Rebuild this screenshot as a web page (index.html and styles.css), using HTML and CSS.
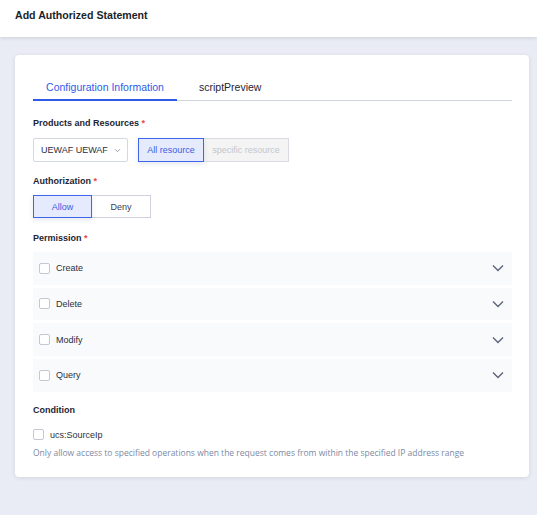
FILE: index.html
```html
<!DOCTYPE html>
<html>
<head>
<meta charset="utf-8">
<link rel="stylesheet" href="styles.css">
</head>
<body>
<header class="topbar"><h1 class="title">Add Authorized Statement</h1></header>
<main class="content">
  <section class="card">
    <nav class="tabs">
      <div class="tab active">Configuration Information</div>
      <div class="tab second">scriptPreview</div>
    </nav>

    <div class="label l-prod">Products and Resources <span class="req">*</span></div>
    <div class="row-controls">
      <div class="select">UEWAF UEWAF
        <svg class="sel-arrow" width="7" height="5" viewBox="0 0 7 5"><path d="M1 1.2l2.5 2.5 2.5-2.5" fill="none" stroke="#8a94a6" stroke-width="0.9"/></svg>
      </div>
      <div class="seg">
        <div class="seg-btn on">All resource</div>
        <div class="seg-btn disabled">specific resource</div>
      </div>
    </div>

    <div class="label l-auth">Authorization <span class="req">*</span></div>
    <div class="seg seg2">
      <div class="seg-btn on w59">Allow</div>
      <div class="seg-btn off w59">Deny</div>
    </div>

    <div class="label l-perm">Permission <span class="req">*</span></div>
    <div class="perms">
      <div class="perm"><span class="cb"></span><span class="perm-name">Create</span><svg class="chev" width="12" height="8" viewBox="0 0 12 8"><path d="M1 1.5l5 5 5-5" fill="none" stroke="#5b6478" stroke-width="1.4"/></svg></div>
      <div class="perm"><span class="cb"></span><span class="perm-name">Delete</span><svg class="chev" width="12" height="8" viewBox="0 0 12 8"><path d="M1 1.5l5 5 5-5" fill="none" stroke="#5b6478" stroke-width="1.4"/></svg></div>
      <div class="perm"><span class="cb"></span><span class="perm-name">Modify</span><svg class="chev" width="12" height="8" viewBox="0 0 12 8"><path d="M1 1.5l5 5 5-5" fill="none" stroke="#5b6478" stroke-width="1.4"/></svg></div>
      <div class="perm"><span class="cb"></span><span class="perm-name">Query</span><svg class="chev" width="12" height="8" viewBox="0 0 12 8"><path d="M1 1.5l5 5 5-5" fill="none" stroke="#5b6478" stroke-width="1.4"/></svg></div>
    </div>

    <div class="label l-cond">Condition</div>
    <div class="cond-item"><span class="cb"></span><span class="cond-name">ucs:SourceIp</span></div>
    <p class="desc">Only allow access to specified operations when the request comes from within the specified IP address range</p>
  </section>
</main>
</body>
</html>
```
FILE: styles.css
```css
* { box-sizing: border-box; }
html, body { margin: 0; padding: 0; }
body {
  background: #e9ecf4;
  font-family: "Liberation Sans", Arial, sans-serif;
  color: #1d2433;
  width: 537px;
  height: 515px;
  overflow: hidden;
}
.topbar {
  height: 37px;
  background: #fff;
  box-shadow: 0 1px 4px rgba(0,0,0,0.12);
  display: flex;
  align-items: center;
  padding-left: 15px;
  position: relative;
  z-index: 1;
}
.title {
  margin: 0;
  font-size: 10.6px;
  font-weight: bold;
  color: #1a1f2b;
  position: relative;
  top: -4px;
}
.content { padding: 18px 8px 0 15px; }
.card {
  width: 514px;
  height: 422px;
  background: #fff;
  border-radius: 4px;
  box-shadow: 0 1px 4px rgba(0,0,0,0.1);
  padding: 18px 18px 0 18px;
}
.tabs {
  display: flex;
  border-bottom: 1px solid #cfd4dd;
  height: 28px;
  width: 479px;
}
.tab {
  font-size: 10.5px;
  color: #1f2533;
  padding-top: 8px;
  height: 28px;
  white-space: nowrap;
}
.tab.active {
  color: #2f5be7;
  border-bottom: 2px solid #2f5be7;
  width: 144px;
  text-align: center;
}
.tab.second { padding-left: 22px; }
.label {
  font-size: 9px;
  font-weight: bold;
  color: #1d2433;
  height: 12px;
  line-height: 12px;
  white-space: nowrap;
}
.l-prod { margin-top: 16px; }
.l-auth { margin-top: 13px; }
.l-perm { margin-top: 14px; }
.l-cond { margin-top: 12px; }
.req { color: #e5484d; }
.row-controls { display: flex; gap: 10px; margin-top: 9px; }
.select {
  width: 95px;
  height: 24px;
  border: 1px solid #d4d8e0;
  border-radius: 2px;
  font-size: 9px;
  color: #2a3040;
  display: flex;
  align-items: center;
  padding-left: 7px;
  gap: 6px;
}
.seg { display: flex; height: 24px; }
.seg-btn {
  height: 24px;
  font-size: 9px;
  display: flex;
  align-items: center;
  justify-content: center;
  border: 1px solid #d8dbe2;
}
.seg-btn.on {
  background: #e5ebfd;
  border-color: #3f66ea;
  color: #3b5ee0;
  width: 66px;
  box-shadow: 0 2px 5px rgba(40,60,120,0.12);
  position: relative;
  z-index: 1;
}
.seg-btn.disabled {
  background: #f4f4f5;
  color: #c4c6cc;
  width: 85px;
  border-left: none;
}
.seg2 { margin-top: 8px; height: 23px; }
.seg2 .seg-btn { height: 23px; }
.seg-btn.w59 { width: 59px; }
.seg-btn.off {
  background: #fff;
  color: #3a4050;
  border-left: none;
  border-color: #cfd2de;
}
.perms { margin-top: 8px; display: flex; flex-direction: column; gap: 3.2px; }
.perm {
  height: 32.5px;
  background: #f9fafc;
  display: flex;
  align-items: center;
  padding-left: 6px;
  padding-right: 8px;
  width: 479px;
}
.cb {
  width: 11px;
  height: 11px;
  border: 1px solid #c3c8d2;
  border-radius: 2px;
  background: #fff;
  flex: none;
}
.perm-name { font-size: 9px; margin-left: 6px; color: #2a3040; flex: 1; }
.chev { flex: none; }
.cond-item { display: flex; align-items: center; margin-top: 13.5px; }
.cond-name { font-size: 9px; margin-left: 6px; color: #2a3040; }
.desc {
  margin: 7px 0 0 0;
  font-family: "Open Sans", sans-serif;
  font-size: 8.5px;
  line-height: 12px;
  color: #7c8aa5;
  white-space: nowrap;
}
```
